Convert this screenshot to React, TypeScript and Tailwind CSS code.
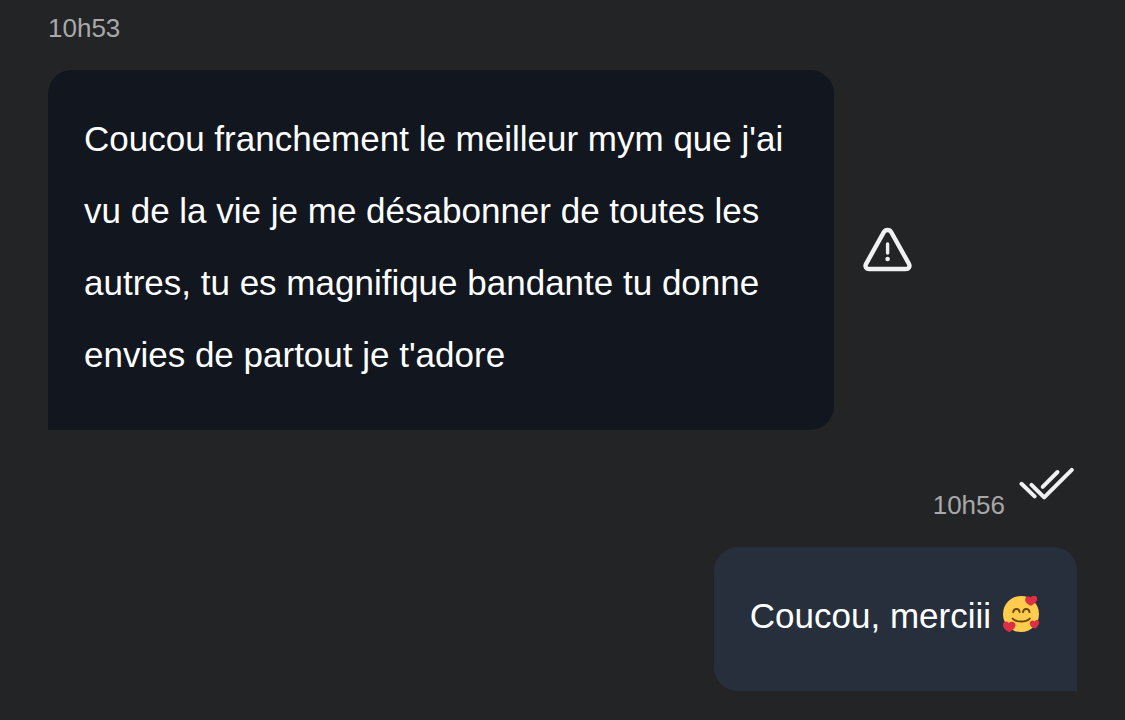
import type { ReactNode } from "react";

function WarningIcon() {
  return (
    <svg viewBox="0 0 50 46" className="h-[46px] w-[50px] shrink-0" fill="none" stroke="#f1f1f1" strokeLinecap="round" strokeLinejoin="round" aria-hidden="true">
      <path strokeWidth="4.4" d="M21.8 5.2 4.1 36.8c-1.5 2.8.1 5.2 3.3 5.2h36.200c3.2 0 4.800-2.400 3.300-5.200L29.300 5.200c-1.700-3-5.800-3-7.500 0Z" />
      <path strokeWidth="3.4" d="M25.6 17v9" />
      <circle cx="25.6" cy="32" r="2.3" fill="#f1f1f1" stroke="none" />
    </svg>
  );
}

function ReadIcon() {
  return (
    <svg viewBox="0 0 56 34" className="h-[34px] w-14 shrink-0" fill="none" stroke="#f1f1f1" strokeWidth="4" strokeLinecap="round" strokeLinejoin="round" role="img" aria-label="Lu">
      <path d="M2.5 16.8 15.6 29.4" />
      <path d="M12.5 17.8 25.2 30.400 52.800 2.800" />
      <path d="M23.700 19.800 38.500 5" />
    </svg>
  );
}

function LoveFace() {
  return (
    <svg viewBox="0 0 36 36" className="mb-1 h-9 w-9 shrink-0" fill="none" role="img" aria-label="Visage souriant avec cœurs">
      <circle cx="18" cy="18" r="18" fill="#ffcc4d" />
      <path d="M10.200 16.200c.6-4.300 5.900-4.300 6.500 0M20 16.200c.6-4.300 5.900-4.300 6.500 0" stroke="#664500" strokeWidth="1.9" strokeLinecap="round" />
      <path d="M9.600 22.600c4.200 4 13 4 17.200 0" stroke="#664500" strokeWidth="2" strokeLinecap="round" />
      <path fill="#dd2e44" d="M22.200 3.400c.3-2.900 3.600-4.100 5.600-2 1.400-2.600 5.200-2.500 6.200.2 1.100 3.100-2.200 6.300-5.800 8.200-3.600-1.200-6.300-3.400-6-6.400Z" />
      <path fill="#dd2e44" d="M0 28c.6-2.900 4.300-3.400 6-.9 1.900-2.300 5.700-1.600 6.400 1.100.7 3-2.700 6-6.200 8C2.500 34.200-.6 31.300 0 28Z" />
      <path fill="#dd2e44" d="M26.800 27c.3-2.400 3.100-3.200 4.700-1.500.9-2 3.800-2.200 4.500-.2.8 2.300-1.300 5.400-3.800 7.300-3.200-.8-5.700-2.900-5.400-5.600Z" />
    </svg>
  );
}

function Bubble({ className, children }: { className: string; children: ReactNode }) {
  return (
    <p className={`rounded-3xl pl-9 pr-[38px] pt-[33px] pb-[39px] text-[35px] leading-[72px] text-white ${className}`}>{children}</p>
  );
}

export default function App() {
  return (
    <main className="min-h-screen bg-[#232426] px-12 pt-3 pb-7 font-['Liberation_Sans',Arial,sans-serif]">
      <article>
        <time dateTime="10:53" className="block text-[26px] leading-8 text-[#a8a8a9]">10h53</time>
        <div className="mt-[26px] flex items-center gap-7">
          <Bubble className="max-w-[786px] rounded-bl-none bg-[#12161f]">
            Coucou franchement le meilleur mym que j'ai vu de la vie je me désabonner de toutes les autres, tu es magnifique bandante tu donne envies de partout je t'adore
          </Bubble>
          <WarningIcon />
        </div>
      </article>
      <article className="mt-[37px] flex flex-col items-end">
        <div className="flex items-start gap-3.5 pr-0.5">
          <time dateTime="10:56" className="mt-[22px] text-[26px] leading-8 text-[#a8a8a9]">10h56</time>
          <ReadIcon />
        </div>
        <Bubble className="mt-[26px] flex items-center gap-3 rounded-br-none bg-[#282f3c]">
          <span>Coucou, merciii</span>
          <LoveFace />
        </Bubble>
      </article>
    </main>
  );
}
